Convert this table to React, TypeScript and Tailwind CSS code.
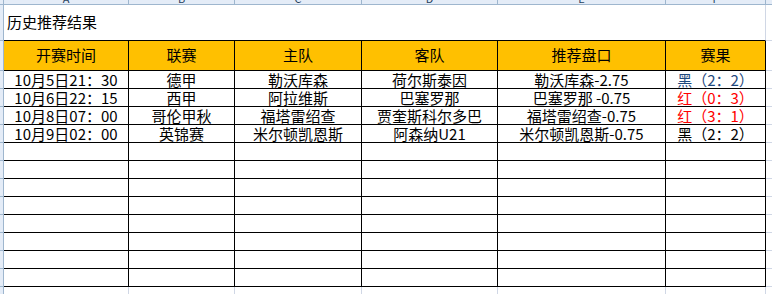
import React from "react";

type Cell = { text: string; color?: string };

const colWidths = ["w-[125px]", "w-[106px]", "w-[127px]", "w-[136px]", "w-[168px]", "w-[100px]"];
const letters = ["A", "B", "C", "D", "E", "F"];

const headers = ["开赛时间", "联赛", "主队", "客队", "推荐盘口", "赛果"];

const rows: Cell[][] = [
  [
    { text: "10月5日21：30" },
    { text: "德甲" },
    { text: "勒沃库森" },
    { text: "荷尔斯泰因" },
    { text: "勒沃库森-2.75" },
    { text: "黑（2：2）", color: "text-[#1f497d]" },
  ],
  [
    { text: "10月6日22：15" },
    { text: "西甲" },
    { text: "阿拉维斯" },
    { text: "巴塞罗那" },
    { text: "巴塞罗那 -0.75" },
    { text: "红（0：3）", color: "text-[#ff0000]" },
  ],
  [
    { text: "10月8日07：00" },
    { text: "哥伦甲秋" },
    { text: "福塔雷绍查" },
    { text: "贾奎斯科尔多巴" },
    { text: "福塔雷绍查-0.75" },
    { text: "红（3：1）", color: "text-[#ff0000]" },
  ],
  [
    { text: "10月9日02：00" },
    { text: "英锦赛" },
    { text: "米尔顿凯恩斯" },
    { text: "阿森纳U21" },
    { text: "米尔顿凯恩斯-0.75" },
    { text: "黑（2：2）" },
  ],
];

while (rows.length < 12) rows.push(headers.map(() => ({ text: "" })));

function RowHead({ className = "" }: { className?: string }) {
  return <div className={`w-[4px] shrink-0 bg-[#e4ecf7] border-r border-b border-[#9eb6ce] ${className}`} />;
}

export default function App() {
  return (
    <div
      className="w-[772px] h-[294px] overflow-hidden bg-white text-black flex flex-col"
      style={{ fontFamily: '"Noto Sans CJK SC", "Liberation Sans", sans-serif' }}
    >
      {/* column letters strip */}
      <div className="flex h-[5px] shrink-0 bg-[#e4ecf7] border-b border-[#9eb6ce] overflow-hidden">
        <div className="w-[4px] shrink-0 border-r border-[#9eb6ce]" />
        {colWidths.map((w, i) => (
          <div key={i} className={`${w} shrink-0 border-r border-[#9eb6ce] flex justify-center`}>
            <span className="text-[11px] leading-[11px] -mt-[7px] text-[#27415f]">{letters[i]}</span>
          </div>
        ))}
        <div className="flex-1" />
      </div>

      {/* title row */}
      <div className="flex h-[36px] shrink-0">
        <RowHead />
        <div className="w-[762px] shrink-0 border-b border-r border-b-black border-r-[#d0d7e5] flex items-center pl-[3px] text-[15px]">
          历史推荐结果
        </div>
        <div className="flex-1 border-b border-[#d0d7e5]" />
      </div>

      {/* header row */}
      <div className="flex h-[30px] shrink-0">
        <RowHead />
        {headers.map((h, i) => (
          <div
            key={i}
            className={`${colWidths[i]} shrink-0 bg-[#ffc000] border-r border-b border-black flex items-center justify-center text-[15px]`}
          >
            {h}
          </div>
        ))}
        <div className="flex-1 border-b border-[#d0d7e5]" />
      </div>

      {/* data rows */}
      {rows.map((r, ri) => (
        <div key={ri} className="flex h-[18px] shrink-0">
          <RowHead />
          {r.map((c, ci) => (
            <div
              key={ci}
              className={`${colWidths[ci]} shrink-0 border-r border-b border-black flex items-end justify-center text-[15px] leading-[17px] whitespace-nowrap ${c.color ?? ""}`}
            >
              {c.text}
            </div>
          ))}
          <div className="flex-1 border-b border-[#d0d7e5]" />
        </div>
      ))}

      {/* trailing partial row */}
      <div className="flex flex-1">
        <RowHead className="border-b-0" />
        {colWidths.map((w, i) => (
          <div key={i} className={`${w} shrink-0 border-r border-[#d0d7e5]`} />
        ))}
        <div className="flex-1" />
      </div>
    </div>
  );
}
